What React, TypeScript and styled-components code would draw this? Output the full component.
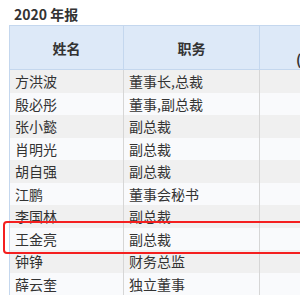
import React from "react";
import styled, { createGlobalStyle } from "styled-components";

const GlobalStyle = createGlobalStyle`
  html, body {
    margin: 0;
    padding: 0;
    background: #ffffff;
    overflow: hidden;
  }
  body {
    font-family: "Noto Sans CJK SC", "Noto Sans", sans-serif;
    color: #333333;
  }
`;

const Page = styled.div`
  width: 300px;
  height: 300px;
  overflow: hidden;
  padding: 0 0 0 9px;
  box-sizing: border-box;
`;

const Title = styled.h3`
  margin: 0;
  padding: 4px 0 0 5px;
  height: 25px;
  box-sizing: border-box;
  font-size: 14px;
  line-height: 20px;
  font-weight: 700;
  color: #333333;
`;

const TableWrap = styled.div`
  position: relative;
  width: 420px;
`;

const Table = styled.div`
  border-top: 1px solid #c4d7ee;
  border-left: 1px solid #c4d7ee;
`;

const Row = styled.div<{ $head?: boolean; $alt?: boolean }>`
  display: grid;
  grid-template-columns: 114px 136px 170px;
  height: ${(p) => (p.$head ? "43px" : "22.5px")};
  background: ${(p) =>
    p.$head ? "#dde9f8" : p.$alt ? "#f0f0f0" : "#f9fafc"};
  border-bottom: ${(p) => (p.$head ? "1px solid #c4d7ee" : "none")};
`;

const Cell = styled.div<{ $head?: boolean }>`
  display: flex;
  align-items: center;
  justify-content: ${(p) => (p.$head ? "center" : "flex-start")};
  padding: 0 5px;
  border-right: 1px solid ${(p) => (p.$head ? "#c4d7ee" : "#d6d6d6")};
  font-size: 14px;
  line-height: 16px;
  font-weight: ${(p) => (p.$head ? 700 : 400)};
  color: #333333;
  white-space: nowrap;
  overflow: hidden;
`;

const UnitCell = styled(Cell)`
  align-items: flex-end;
  justify-content: flex-start;
  padding: 0 0 2px 36px;
`;

const Highlight = styled.div`
  position: absolute;
  left: -6px;
  top: 196px;
  width: 330px;
  height: 33px;
  box-sizing: border-box;
  border: 2px solid #f41f1f;
  border-radius: 4px;
  pointer-events: none;
`;

const people = [
  ["方洪波", "董事长,总裁"],
  ["殷必彤", "董事,副总裁"],
  ["张小懿", "副总裁"],
  ["肖明光", "副总裁"],
  ["胡自强", "副总裁"],
  ["江鹏", "董事会秘书"],
  ["李国林", "副总裁"],
  ["王金亮", "副总裁"],
  ["钟铮", "财务总监"],
  ["薛云奎", "独立董事"],
];

export default function App() {
  return (
    <Page>
      <GlobalStyle />
      <Title>2020 年报</Title>
      <TableWrap>
        <Table>
          <Row $head>
            <Cell $head>姓名</Cell>
            <Cell $head>职务</Cell>
            <UnitCell $head>(万元)</UnitCell>
          </Row>
          {people.map(([name, title], i) => (
            <Row key={name} $alt={i % 2 === 0}>
              <Cell>{name}</Cell>
              <Cell>{title}</Cell>
              <Cell />
            </Row>
          ))}
        </Table>
        <Highlight />
      </TableWrap>
    </Page>
  );
}
